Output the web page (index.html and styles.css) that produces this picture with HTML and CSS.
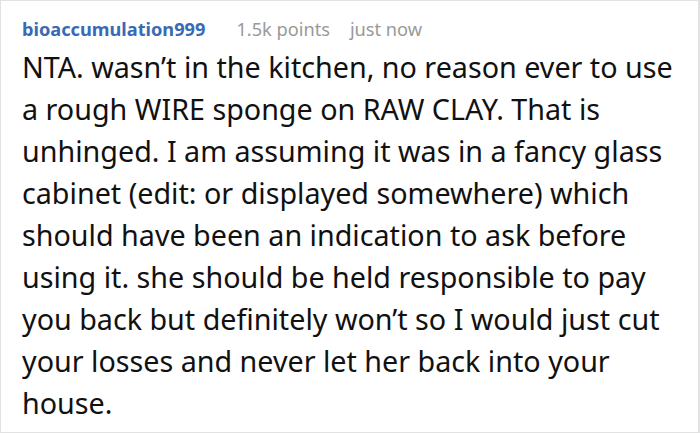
FILE: index.html
```html
<!DOCTYPE html>
<html>
<head>
<meta charset="utf-8">
<link rel="stylesheet" href="styles.css">
</head>
<body>
<div class="comment">
  <div class="meta">
    <span class="author">bioaccumulation999</span>
    <span class="points">1.5k points</span>
    <span class="time">just now</span>
  </div>
  <p class="text">NTA. wasn’t in the kitchen, no reason ever to use a rough WIRE sponge on RAW CLAY. That is unhinged. I am assuming it was in a fancy glass cabinet (edit: or displayed somewhere) which should have been an indication to ask before using it. she should be held responsible to pay you back but definitely won’t so I would just cut your losses and never let her back into your house.</p>
</div>
</body>
</html>
```
FILE: styles.css
```css
html, body {
  margin: 0;
  padding: 0;
  background: #fff;
}
.comment {
  box-sizing: border-box;
  width: 700px;
  height: 433px;
  border: 1px solid #e2e2e2;
  border-right-width: 2px;
  padding: 15px 21px 0 21px;
  font-family: "Noto Sans", "Open Sans", sans-serif;
}
.meta {
  display: flex;
  align-items: baseline;
  font-size: 18.2px;
  line-height: 26px;
}
.author {
  color: #3a6ab5;
  font-weight: 700;
}
.points {
  color: #999;
  margin-left: 31px;
}
.time {
  color: #999;
  margin-left: 20px;
}
.text {
  margin: 4px 0 0 0;
  font-size: 28.7px;
  line-height: 42px;
  color: #111;
  width: 662px;
}
```
